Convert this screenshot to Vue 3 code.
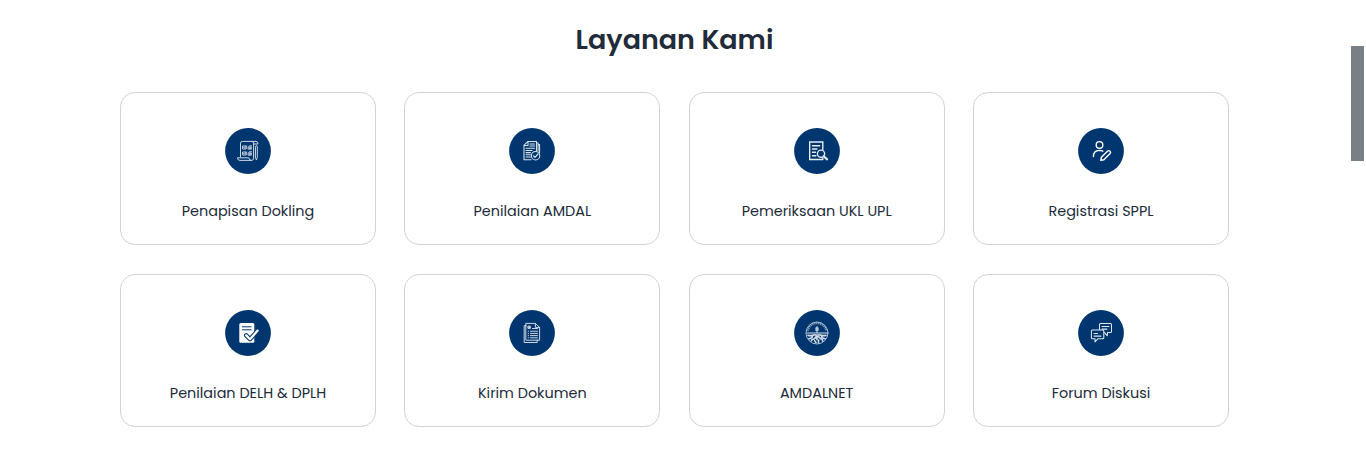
<script setup>
const services = [
  { id: 'screening', label: 'Penapisan Dokling' },
  { id: 'assessment', label: 'Penilaian AMDAL' },
  { id: 'inspection', label: 'Pemeriksaan UKL UPL' },
  { id: 'registration', label: 'Registrasi SPPL' },
  { id: 'delh', label: 'Penilaian DELH & DPLH' },
  { id: 'send', label: 'Kirim Dokumen' },
  { id: 'amdalnet', label: 'AMDALNET' },
  { id: 'forum', label: 'Forum Diskusi' }
]
</script>

<template>
  <main class="page">
    <h2 class="title">Layanan Kami</h2>
    <div class="grid">
      <a v-for="s in services" :key="s.id" class="card">
        <svg class="icon" viewBox="0 0 46 46" fill="none" stroke="#fff" stroke-linecap="round" stroke-linejoin="round">
          <circle cx="23" cy="23" r="22.9" fill="#00366f" stroke="none" />
          <g v-if="s.id === 'screening'" stroke-width="1" opacity=".8">
            <path d="M15.5 29V15.2q0-1.8 1.8-1.8H31q2 0 2 2.6h-4M29 16q0-2.4-1.8-2.4M28.6 16v14.2q0 2.2-2 2.2H15q-2.4 0-2.6-2.6h11.4q.2 2.6 2.4 2.6" />
            <path d="M18 18h3.2v3H18zM18 24h3.2v3H18zM18.7 19.3l.9.9 1.8-2.2M18.7 25.3l.9.9 1.8-2.2" />
            <path d="M23.4 18.8h3v2.4h-3zM23.4 24.8h3v2.4h-3zM24.5 17.8h2M24.5 23.6h2" fill="#fff" opacity=".8" />
            <path d="M30.5 19q0-1.5.9-1.5t.9 1.5v10.5l-.9 2.5-.9-2.5z" />
          </g>
          <g v-else-if="s.id === 'assessment'" stroke-width="1.05" opacity=".85">
            <path d="M22 31.8h-7V17.2l4-3.8h8.5v9M19 13.5v4h-4M27.5 15h1.6v8M29.1 16.6h1.5v8" />
            <path d="M21 16h4.5M21 18h4.5M17 20.2h8.5M17 22.4h6M17 24.6h4.5M17 26.8h4.5M17 29h4.5" />
            <circle cx="26.6" cy="27.7" r="4.2" /><path d="M24.5 27.8l1.5 1.6 3-3.4" stroke-width="1.2" />
          </g>
          <g v-else-if="s.id === 'inspection'" stroke-width="1.4" opacity=".9">
            <path d="M28.8 31.5H15.7V14h13.1v7.5M28.8 31.5v-1.5" stroke-linejoin="miter" />
            <path d="M18.5 17.7h7.2M18.5 21h4.4M18.5 24.3h3M18.5 27.7h3.4" />
            <circle cx="27" cy="25.7" r="3.6" fill="#00366f" /><path d="M29.7 28.3l3.4 3.1" stroke-width="2.1" />
          </g>
          <g v-else-if="s.id === 'registration'" stroke-width="1.4">
            <circle cx="21.5" cy="16.9" r="3.3" />
            <path d="M15.4 28.5q0-5.8 5.9-6.1 2.2 0 3.5.8" />
            <path d="M22.8 32.3l.6-3.1 6.3-6.1q1.1-1 2.3.1t.1 2.3l-6.2 6.2z" />
          </g>
          <g v-else-if="s.id === 'delh'">
            <rect x="14.3" y="13" width="15" height="19.8" rx="1.5" fill="#fff" stroke="none" />
            <path d="M17.3 16.8h8.8M17.3 19.8h8.8" stroke="#00366f" stroke-width="1" />
            <path d="M21.2 25.4l3.8 3.8 7.6-8.6" stroke="#00366f" stroke-width="4.4" />
            <path d="M21.2 25.4l3.8 3.8 7.6-8.6" stroke-width="2.3" />
          </g>
          <g v-else-if="s.id === 'send'" stroke-width="1" opacity=".8">
            <path d="M17.2 15.7h-2v16.8h13V30M17.2 13.4h9.2l4.2 4v12.8H17.2zM26.4 13.4v4h4.2" />
            <path d="M19.3 16.2h2v2.2h-2z" fill="#fff" />
            <path d="M23.5 18.5h5M19.2 21.2h.3M21.5 21.2h7M19.2 23.4h.3M21.5 23.4h7M19.2 25.6h.3M21.5 25.6h7M19.2 27.8h.3M21.5 27.8h7" />
          </g>
          <g v-else-if="s.id === 'amdalnet'" stroke-width=".8" opacity=".82">
            <circle cx="23" cy="23" r="11" stroke-width=".8" />
            <path d="M13.8 20.6a9.4 9.4 0 0 1 18.4 0" stroke-width="2" stroke-dasharray="1.2 .8" stroke-linecap="butt" opacity=".7" />
            <path d="M13 23h20" stroke-width="1.1" />
            <path d="M23 23v-5" stroke-width="1" />
            <path d="M21.8 18.2h2.4M21.8 20h2.4M23 16.8v.2" stroke-width="1.3" />
            <path d="M20.5 24.8q-2.5 1.2-6.5.6M18.5 26q0 2.2-3.6 2.8M22 24.8q1 2.8-2 4M19.8 29q-2.4.4-2.4 1.8M23 26.5v3.2M22 32.6l-1.4-2M25.5 24.8q2.5 1.2 6.5.6M27.5 26q0 2.2 3.6 2.8M24 24.8q.2 2.8 2.8 3.6M26.6 28.8q2.4.8 2 2.2M24.4 32.6l.2-2.6" stroke-width="1.6" />
          </g>
          <g v-else stroke-width="1.05" opacity=".88">
            <path d="M21.5 19.4v-5q0-1 1-1h10q1 0 1 1v7.2q0 1-1 1h-3l-.2 3.2-2.8-3.2" />
            <path d="M14.4 20h10.4q1 0 1 1v6.8q0 1-1 1h-5l-2.8 3.1v-3.1h-2.6q-1 0-1-1V21q0-1 1-1z" />
            <path d="M24 16.5h7M24 19.1h5M16 23.5h3.5M16 26.1h7" />
          </g>
        </svg>
        <span class="label">{{ s.label }}</span>
      </a>
    </div>
    <div class="thumb"></div>
  </main>
</template>

<style scoped>
.page {
  width: 1366px;
  height: 462px;
  box-sizing: border-box;
  padding: 19px 137px 0 120px;
  background: #fff;
  color: #212b3a;
  font-family: Poppins, Inter, sans-serif;
  overflow: hidden;
}
.title {
  margin: 0 0 31px;
  font-size: 27px;
  line-height: 42px;
  font-weight: 600;
  text-align: center;
}
.grid {
  display: grid;
  grid-template-columns: repeat(4, 256px);
  grid-auto-rows: 153px;
  justify-content: space-between;
  row-gap: 29px;
}
.card {
  box-sizing: border-box;
  border: 1px solid #d1d2da;
  border-radius: 15px;
  padding-top: 35px;
  display: flex;
  flex-direction: column;
  align-items: center;
  gap: 26px;
}
.icon {
  width: 46px;
  height: 46px;
  flex: none;
}
.label {
  font-size: 14.4px;
  line-height: 22px;
  white-space: nowrap;
}
.thumb {
  position: absolute;
  left: 1351px;
  top: 46px;
  width: 13px;
  height: 115px;
  background: #788087;
}
</style>

<style>
body {
  margin: 0;
  overflow: hidden;
}
</style>
